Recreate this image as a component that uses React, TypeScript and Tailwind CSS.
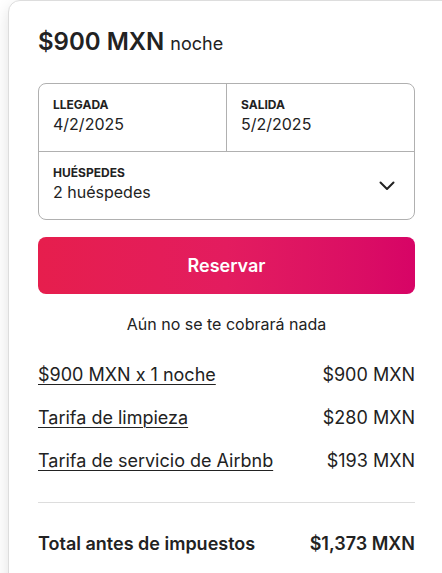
const fees = [
    { label: '$900 MXN x 1 noche', amount: '$900 MXN' },
    { label: 'Tarifa de limpieza', amount: '$280 MXN' },
    { label: 'Tarifa de servicio de Airbnb', amount: '$193 MXN' },
];

export default function App() {
    return (
        <div className="h-[573px] w-[442px] overflow-hidden bg-white pl-2 font-['Inter',sans-serif] text-[#222222]">
            <div className="w-[460px] rounded-t-xl border border-[#dddddd] bg-white pl-[29px] pt-[26px] pb-10 shadow-[0_6px_16px_rgba(0,0,0,0.12)]">
                <div className="w-[377px]">
                    {/* Price header */}
                    <div className="flex items-baseline gap-1.5">
                        <span className="text-[24px] font-semibold leading-[30px]">$900 MXN</span>
                        <span className="text-[18px] leading-[22px]">noche</span>
                    </div>

                    {/* Dates and guests */}
                    <div className="mt-[26px] rounded-lg border border-[#b0b0b0]">
                        <div className="flex border-b border-[#b0b0b0]">
                            <div className="flex-1 border-r border-[#b0b0b0] px-[14px] pt-[14px] pb-[15px]">
                                <div className="text-[12px] font-bold leading-[14px] uppercase">Llegada</div>
                                <div className="text-[16px] leading-[24px]">4/2/2025</div>
                            </div>
                            <div className="flex-1 px-[14px] pt-[14px] pb-[15px]">
                                <div className="text-[12px] font-bold leading-[14px] uppercase">Salida</div>
                                <div className="text-[16px] leading-[24px]">5/2/2025</div>
                            </div>
                        </div>
                        <div className="flex items-center justify-between px-[14px] pt-[14px] pb-[15px]">
                            <div>
                                <div className="text-[12px] font-bold leading-[14px]">HUÉSPEDES</div>
                                <div className="text-[16px] leading-[24px]">2 huéspedes</div>
                            </div>
                            <svg width="16" height="10" viewBox="0 0 16 10" fill="none" className="mr-[5px] mt-[2px]">
                                <path d="M1.5 1.5 8 8l6.5-6.5" stroke="#222222" strokeWidth="2" strokeLinecap="round" strokeLinejoin="round" />
                            </svg>
                        </div>
                    </div>

                    {/* Reserve button */}
                    <button className="mt-[17px] flex h-[57px] w-full items-center justify-center rounded-lg bg-gradient-to-r from-[#e61e4d] via-[#e31c5f] to-[#d70466] text-[18px] font-semibold text-white">
                        Reservar
                    </button>

                    <p className="mt-[20px] text-center text-[16px] leading-5">Aún no se te cobrará nada</p>

                    {/* Fees */}
                    <div className="mt-[29px] flex flex-col gap-[19px] border-b border-[#dddddd] pb-[29px]">
                        {fees.map(fee => (
                            <div key={fee.label} className="flex justify-between text-[18px] leading-[24px]">
                                <span className="underline decoration-1 underline-offset-[3px]">{fee.label}</span>
                                <span>{fee.amount}</span>
                            </div>
                        ))}
                    </div>

                    <div className="mt-[29px] flex justify-between text-[18px] font-semibold leading-[24px]">
                        <span>Total antes de impuestos</span>
                        <span>$1,373 MXN</span>
                    </div>
                </div>
            </div>
        </div>
    );
}
